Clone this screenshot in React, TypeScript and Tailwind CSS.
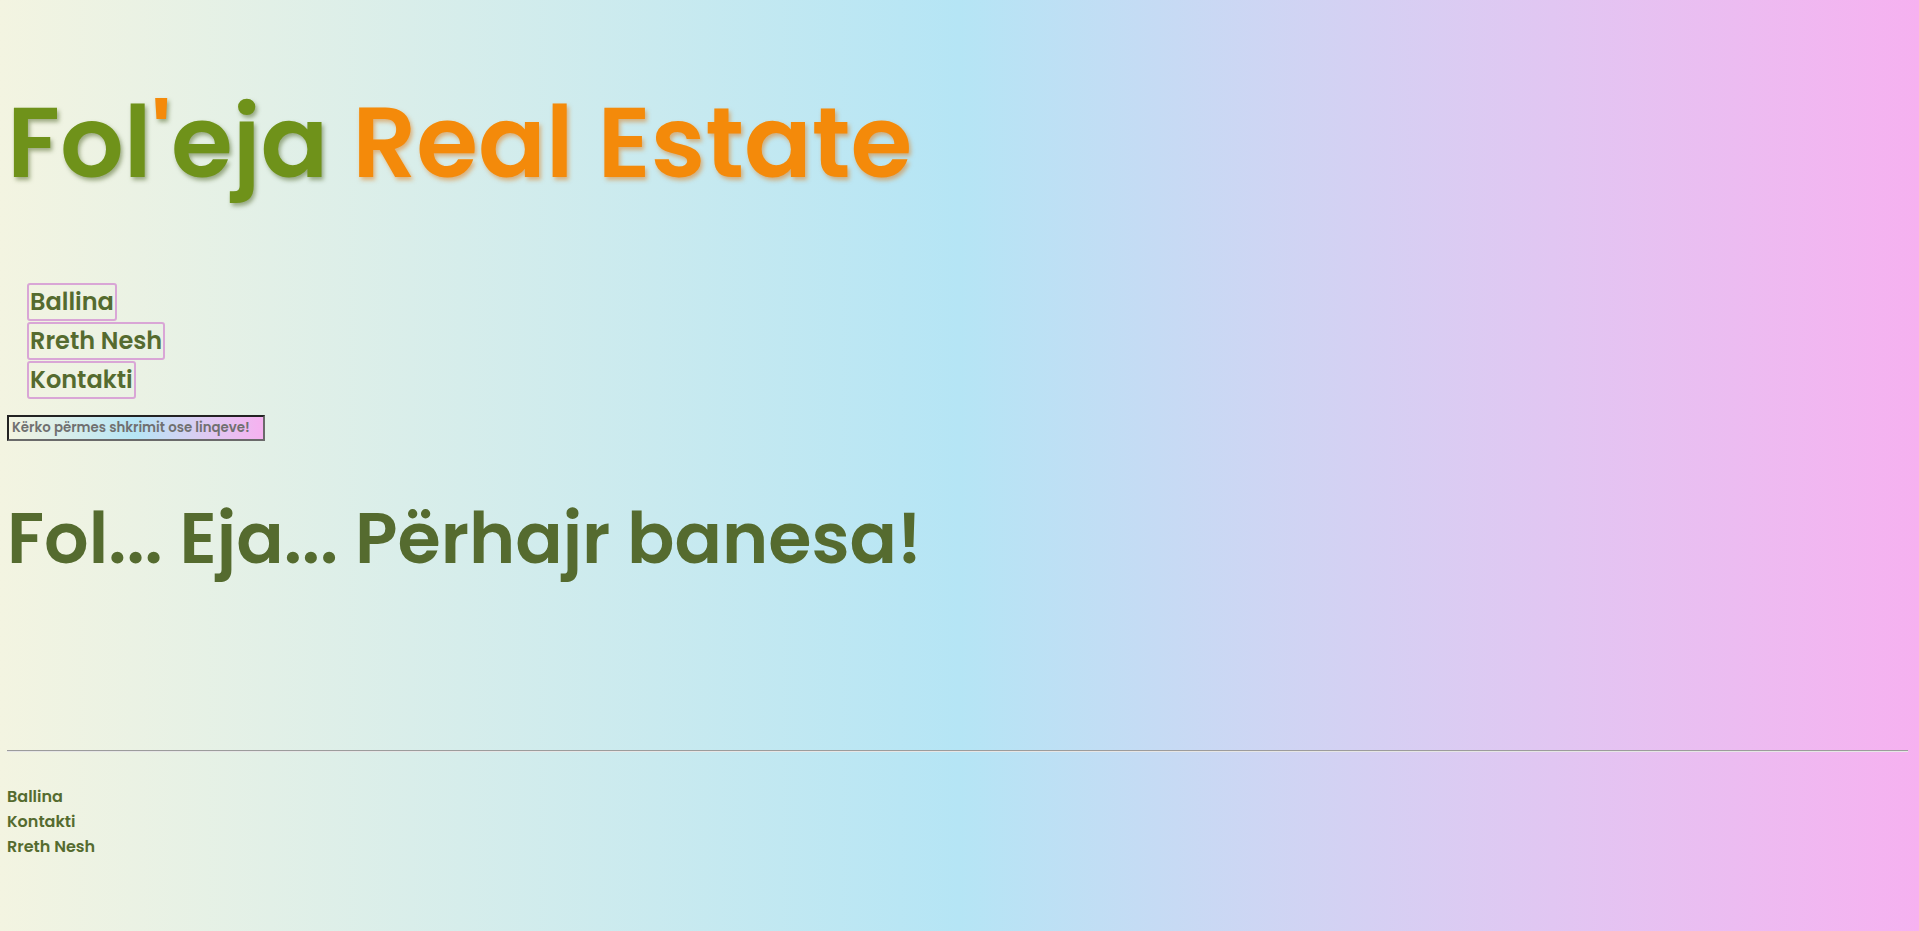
import React from 'react';

const navLinks = ['Ballina', 'Rreth Nesh', 'Kontakti'];
const footerLinks = ['Ballina', 'Kontakti', 'Rreth Nesh'];

const App: React.FC = () => {
  return (
    <div className="min-h-[931px] w-full bg-gradient-to-r from-[#f3f4e1] via-[#b5e5f5] to-[#f6b1f0] pl-[7px] pr-[11px] pb-[60px] font-['Poppins','Inter',sans-serif]">
      {/* Header */}
      <header>
        <h1 className="pt-[94px] text-[100px] leading-[96px] font-semibold text-[#6f921a] [text-shadow:2px_3px_4px_rgba(85,107,47,0.55)] whitespace-nowrap">
          Fol<span className="text-[#f48a0a]">'</span>eja{' '}
          <span className="text-[#f48a0a] [text-shadow:2px_3px_4px_rgba(220,120,20,0.5)]">Real Estate</span>
        </h1>

        <nav className="mt-[93px] ml-[20px]">
          <ul className="flex flex-col items-start gap-[1px]">
            {navLinks.map(link => (
              <li key={link}>
                <a
                  href="#"
                  className="block border-2 border-[#d9a6d6] rounded-[3px] px-[1px] text-[24px] leading-[34px] font-semibold text-[#556b2f]"
                >
                  {link}
                </a>
              </li>
            ))}
          </ul>
        </nav>

        <input
          type="text"
          placeholder="Kërko përmes shkrimit ose linqeve!"
          className="mt-[16px] block w-[258px] h-[26px] px-[3px] border-2 border-t-[#222] border-l-[#222] border-b-[#6a6a6a] border-r-[#6a6a6a] bg-gradient-to-r from-[#f3f4e1] via-[#b5e5f5] to-[#f6b1f0] text-[13.33px] font-semibold text-[#555] placeholder:text-[#707070] outline-none"
        />
      </header>

      {/* Hero */}
      <main>
        <h2 className="mt-[64px] text-[70px] leading-[68px] font-semibold text-[#556b2f] whitespace-nowrap">
          Fol... Eja... Përhajr banesa!
        </h2>
      </main>

      {/* Footer */}
      <footer className="mt-[177px]">
        <hr className="border-0 border-t border-t-[#9c9c9c] border-b border-b-[#e6e6e6]" />
        <ul className="mt-[32px]">
          {footerLinks.map(link => (
            <li key={link}>
              <a href="#" className="text-[16px] leading-[25px] font-semibold text-[#556b2f]">
                {link}
              </a>
            </li>
          ))}
        </ul>
      </footer>
    </div>
  );
};

export default App;
